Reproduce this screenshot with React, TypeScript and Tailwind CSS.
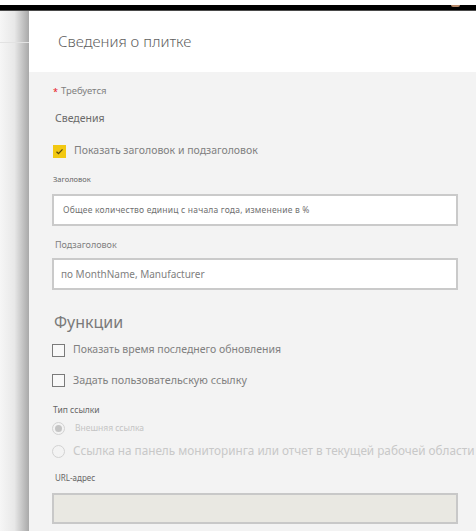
import React from 'react';

function Checkbox({ checked }: { checked?: boolean }) {
  if (checked) {
    return (
      <div className="w-[13px] h-[13px] bg-[#f2c811] flex items-center justify-center shrink-0">
        <svg width="9" height="9" viewBox="0 0 9 9" fill="none">
          <path d="M1.5 4.8 L3.5 6.6 L7.5 2.4" stroke="#5a4a10" strokeWidth="1.3" />
        </svg>
      </div>
    );
  }
  return <div className="w-[13px] h-[13px] border border-[#7a7a7a] bg-[#f8f8f8] shrink-0" />;
}

function Radio({ selected }: { selected?: boolean }) {
  return (
    <div className="w-[13px] h-[13px] rounded-full border border-[#d2d2d2] flex items-center justify-center shrink-0">
      {selected && <div className="w-[7px] h-[7px] rounded-full bg-[#c4c4c4]" />}
    </div>
  );
}

export default function App() {
  return (
    <div
      className="w-[476px] h-[531px] overflow-hidden bg-white relative flex flex-col"
      style={{ fontFamily: '"Noto Sans", "Open Sans", sans-serif' }}
    >
      {/* top bar */}
      <div className="h-[5px] bg-white" />
      <div className="h-[5px] bg-black relative">
        <div className="absolute right-[16px] top-0 w-[9px] h-[2px] rounded-b-full bg-[#b88a6a]" />
      </div>
      <div className="h-[1px] bg-[#4a4a4a]" />

      <div className="flex flex-1 min-h-0">
        {/* left shadow strip */}
        <div className="w-[29px] shrink-0 flex flex-col bg-gradient-to-r from-[#f6f6f6] via-[#e8e8e8] to-[#a9a9a9]">
          <div className="h-[32px] border-b border-[#e2e2e2]" />
        </div>

        {/* panel */}
        <div className="flex-1 min-w-0 overflow-hidden flex flex-col">
          <div className="h-[61px] bg-white flex items-center pl-[29px]">
            <span className="text-[15px] font-light text-[#5f5f5f]">Сведения о плитке</span>
          </div>

          <div className="flex-1 bg-[#f3f3f3] pl-[23px] flex flex-col">
            <div className="h-[38px] flex items-center gap-[3px] pl-[1px]">
              <span className="text-[#e81123] text-[9px] leading-none">*</span>
              <span className="text-[9.5px] text-[#808080]">Требуется</span>
            </div>
            <div className="h-[18px] flex items-center pl-[3px]">
              <span className="text-[10.5px] text-[#6a6a6a]">Сведения</span>
            </div>
            <div className="h-[46px] flex items-center gap-[8px] pl-[1px]">
              <Checkbox checked />
              <span className="text-[10.5px] text-[#808080]">Показать заголовок и подзаголовок</span>
            </div>
            <div className="h-[12px] flex items-center pl-[1px]">
              <span className="text-[7.5px] text-[#666]">Заголовок</span>
            </div>
            <div className="mt-[8px] h-[32px] w-[406px] bg-white border-2 border-[#cacaca] flex items-center pl-[9px]">
              <span className="text-[8.5px] tracking-[0.2px] text-[#707070] whitespace-nowrap">
                Общее количество единиц с начала года, изменение в %
              </span>
            </div>
            <div className="mt-[8px] h-[22px] flex items-center pl-[3px]">
              <span className="text-[9px] text-[#808080]">Подзаголовок</span>
            </div>
            <div className="mt-[2px] h-[32px] w-[406px] bg-white border-2 border-[#cacaca] flex items-center pl-[7px]">
              <span className="text-[10px] text-[#808080]">по MonthName, Manufacturer</span>
            </div>
            <div className="mt-[16px] h-[32px] flex items-center pl-[2px]">
              <span className="text-[16px] text-[#7a7a7a]">Функции</span>
            </div>
            <div className="h-[24px] flex items-center gap-[8px]">
              <Checkbox />
              <span className="text-[10.5px] text-[#808080]">Показать время последнего обновления</span>
            </div>
            <div className="mt-[6px] h-[24px] flex items-center gap-[8px]">
              <Checkbox />
              <span className="text-[10.75px] text-[#808080]">Задать пользовательскую ссылку</span>
            </div>
            <div className="mt-[10px] h-[16px] flex items-center pl-[1px]">
              <span className="text-[8.5px] text-[#666]">Тип ссылки</span>
            </div>
            <div className="mt-[1px] h-[18px] flex items-center gap-[10px]">
              <Radio selected />
              <span className="text-[8.5px] text-[#c4c4c4]">Внешняя ссылка</span>
            </div>
            <div className="mt-[4px] h-[20px] flex items-center gap-[8px] whitespace-nowrap">
              <Radio />
              <span className="text-[11.75px] text-[#c8c8c8]">
                Ссылка на панель мониторинга или отчет в текущей рабочей области
              </span>
            </div>
            <div className="mt-[9px] h-[16px] flex items-center pl-[3px]">
              <span className="text-[8px] text-[#666]">URL-адрес</span>
            </div>
            <div className="mt-[7px] h-[31px] w-[406px] shrink-0 bg-[#e9e8e2] border-2 border-[#c8c8c8]" />
          </div>
        </div>
      </div>
    </div>
  );
}
